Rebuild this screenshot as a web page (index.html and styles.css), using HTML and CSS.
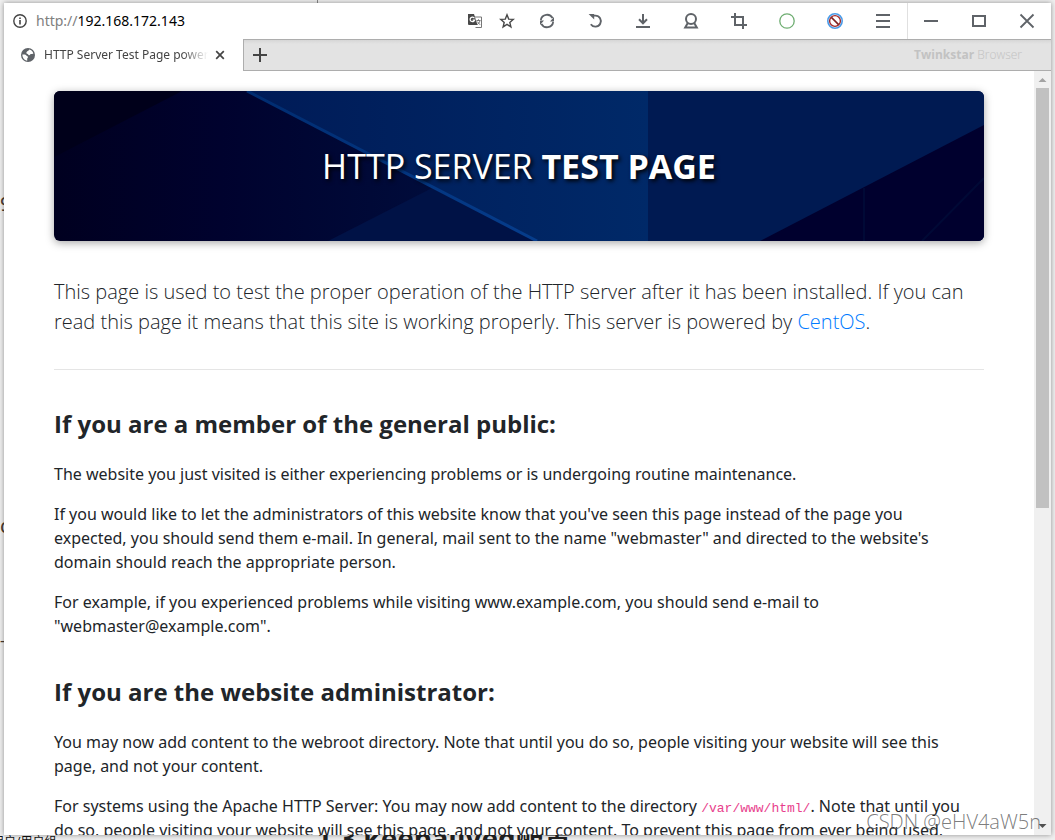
FILE: index.html
```html
<!DOCTYPE html>
<html lang="en">
<head>
  <meta charset="utf-8">
  <title>HTTP Server Test Page powered by CentOS</title>
  <link rel="stylesheet" href="styles.css">
</head>
<body>
  <!-- document lying behind the browser window -->
  <div class="desktop" aria-hidden="true">
    <span class="scrap scrap-nine">9</span>
    <span class="scrap scrap-c">c</span>
    <span class="scrap scrap-dash">-</span>
    <span class="scrap scrap-users">用户/用户组</span>
    <span class="scrap scrap-heading">1.3 keepalived配置</span>
    <span class="scrap-line"></span>
  </div>

  <div class="window">
    <header class="toolbar">
      <div class="address">
        <svg class="info" viewBox="0 0 16 16"><circle cx="8" cy="8" r="6.2" fill="none" stroke="currentColor" stroke-width="1.4"/><path d="M7.2 7h1.6v4.4H7.2zM7.2 4.4h1.6V6H7.2z" fill="currentColor"/></svg>
        <label for="url">http://</label>
        <input type="text" id="url" value="192.168.172.143">
      </div>
      <button type="button" class="tool small" aria-label="Translate">
        <svg viewBox="0 0 16 16"><path d="M7 4h7.5v10.5H8.5" fill="none" stroke="#777"/><path d="M1 1h6l3.5 11H2a1 1 0 0 1-1-1z" fill="#484848"/><path d="M7.4 5.2A2.3 2.3 0 1 0 7.6 7.2H5.6" fill="none" stroke="#fff" stroke-width="1.2"/><path d="M9.5 7.5h4M11.5 6.3v1.2M13 7.6c-.5 1.8-1.6 3.2-2.8 4M10.3 8.6l2.8 3.2" fill="none" stroke="#777"/></svg>
      </button>
      <button type="button" class="tool small" aria-label="Bookmark">
        <svg viewBox="0 0 16 16"><path d="M8 1.8l1.7 4.3 4.6.3-3.5 3 1.1 4.5L8 11.4l-3.9 2.5 1.1-4.5-3.5-3 4.6-.3z" fill="none" stroke="currentColor" stroke-width="1.4"/></svg>
      </button>
      <button type="button" class="tool" aria-label="Reload">
        <svg viewBox="0 0 16 16"><path d="M1.8 7A6.3 6.3 0 0 1 13.6 5.2M14.2 9A6.3 6.3 0 0 1 2.4 10.8" fill="none" stroke="currentColor" stroke-width="1.8"/><path d="M15 4v4.5h-4zM1 12V7.5h4z" fill="currentColor"/></svg>
      </button>
      <button type="button" class="tool" aria-label="Undo close">
        <svg viewBox="0 0 16 16"><path d="M6 2.6h2.4a5.5 5.5 0 1 1-4.6 8.6" fill="none" stroke="currentColor" stroke-width="1.9"/><path d="M1.6 1h5.6v5.6z" fill="currentColor"/></svg>
      </button>
      <button type="button" class="tool" aria-label="Downloads">
        <svg viewBox="0 0 16 16"><path d="M8 1v9M4 6.3l4 4 4-4M1 14h14" fill="none" stroke="currentColor" stroke-width="2"/></svg>
      </button>
      <button type="button" class="tool" aria-label="Account">
        <svg viewBox="0 0 16 16"><circle cx="8" cy="6" r="5" fill="none" stroke="currentColor" stroke-width="2"/><path d="M4.8 10L2.2 14.6h11.6L11.2 10" fill="none" stroke="currentColor" stroke-width="2"/></svg>
      </button>
      <button type="button" class="tool" aria-label="Screenshot">
        <svg viewBox="0 0 16 16"><path d="M4 0v12h12M0 4h12v12" fill="none" stroke="currentColor" stroke-width="2"/></svg>
      </button>
      <button type="button" class="tool" aria-label="Status">
        <svg viewBox="0 0 16 16"><circle cx="8" cy="8" r="7.2" fill="none" stroke="#6fae72" stroke-width="1.3"/></svg>
      </button>
      <button type="button" class="tool" aria-label="Block ads">
        <svg viewBox="0 0 16 16"><circle cx="8" cy="8" r="7.2" fill="#fff" stroke="#4a9be8" stroke-width="1.6"/><circle cx="8" cy="8" r="5.4" fill="none" stroke="#a02a2a" stroke-width="1.4"/><path d="M4.4 4.4l7.2 7.2" stroke="#7c2222" stroke-width="1.6"/></svg>
      </button>
      <button type="button" class="tool" aria-label="Menu">
        <svg viewBox="0 0 16 16"><path d="M1 2h14M1 8h14M1 14h14" stroke="currentColor" stroke-width="2"/></svg>
      </button>
      <div class="window-buttons">
        <button type="button" class="tool" aria-label="Minimize">
          <svg viewBox="0 0 16 16"><path d="M1 8h14" stroke="currentColor" stroke-width="2"/></svg>
        </button>
        <button type="button" class="tool" aria-label="Maximize">
          <svg viewBox="0 0 16 16"><path d="M2 3h12v10H2z" fill="none" stroke="currentColor" stroke-width="2"/></svg>
        </button>
        <button type="button" class="tool" aria-label="Close">
          <svg viewBox="0 0 16 16"><path d="M1.5 1.5l13 13M14.5 1.5l-13 13" stroke="currentColor" stroke-width="1.8"/></svg>
        </button>
      </div>
    </header>

    <nav class="tabs">
      <div class="tab">
        <svg class="globe" viewBox="0 0 16 16"><circle cx="8" cy="8" r="7" fill="#5f6368"/><path d="M2.4 7.6c2-.4 3.4 0 4 .8.5.8 1.6.6 1.6 1.6s-.8 1-.8 1.8v2C4.4 13.4 2.3 11 2.4 7.6zM6.4 5.6c.2-1.4 2.4-1.4 2.8-3 2 .4 3.6 1.8 4.2 4-1.2.8-1.8 0-2.6.4s-.8 1.4-1.8 1.2-.6-1-1.4-1.2-1.4-.2-1.2-1.4z" fill="#fff"/></svg>
        <a class="tab-title" href="#">HTTP Server Test Page powered by CentOS</a>
        <button type="button" class="tab-close" aria-label="Close tab">
          <svg viewBox="0 0 10 10"><path d="M1.2 1.2l7.6 7.6M8.8 1.2L1.2 8.8" stroke="currentColor" stroke-width="1.7"/></svg>
        </button>
      </div>
      <div class="strip">
        <button type="button" class="new-tab" aria-label="New tab">
          <svg viewBox="0 0 14 14"><path d="M7 0v14M0 7h14" stroke="currentColor" stroke-width="2"/></svg>
        </button>
        <span class="brand"><b>Twinkstar</b> Browser</span>
      </div>
    </nav>

    <div class="view">
      <main class="page">
        <div class="hero">
          <svg class="hero-art" viewBox="0 0 930 150" preserveAspectRatio="none">
            <defs>
              <linearGradient id="night" x1="0" y1="0" x2="1" y2="0">
                <stop offset="0" stop-color="#000020"/>
                <stop offset="0.18" stop-color="#00022e"/>
                <stop offset="0.5" stop-color="#001040"/>
              </linearGradient>
              <linearGradient id="beam" x1="0" y1="0" x2="1" y2="0">
                <stop offset="0" stop-color="#001b57"/>
                <stop offset="1" stop-color="#002968"/>
              </linearGradient>
              <linearGradient id="edge" x1="0" y1="0" x2="1" y2="1">
                <stop offset="0" stop-color="#002c70"/>
                <stop offset="1" stop-color="#063d8c"/>
              </linearGradient>
            </defs>
            <rect width="930" height="150" fill="url(#night)"/>
            <path d="M0 0h128L0 66z" fill="#00001a"/>
            <path d="M274 150l104-53 105 53z" fill="#001246"/>
            <path d="M193 0h401v150H483z" fill="url(#beam)"/>
            <path d="M193 0l290 150" stroke="url(#edge)" stroke-width="3"/>
            <path d="M594 0h336v150H594z" fill="#001a52"/>
            <path d="M706 150L930 34v116z" fill="#00002e"/>
            <path d="M810 97v53M868 150l62-63" stroke="#000936" stroke-width="2" fill="none"/>
          </svg>
          <h1>HTTP SERVER <strong>TEST PAGE</strong></h1>
        </div>

        <p class="lead">This page is used to test the proper operation of the HTTP server after it has been installed. If you can read this page it means that this site is working properly. This server is powered by <a href="#">CentOS</a>.</p>
        <hr>

        <h2>If you are a member of the general public:</h2>
        <p>The website you just visited is either experiencing problems or is undergoing routine maintenance.</p>
        <p>If you would like to let the administrators of this website know that you've seen this page instead of the page you<br>expected, you should send them e-mail. In general, mail sent to the name "webmaster" and directed to the website's<br>domain should reach the appropriate person.</p>
        <p>For example, if you experienced problems while visiting www.example.com, you should send e-mail to "webmaster@example.com".</p>

        <h2>If you are the website administrator:</h2>
        <p>You may now add content to the webroot directory. Note that until you do so, people visiting your website will see this page, and not your content.</p>
        <p>For systems using the Apache HTTP Server: You may now add content to the directory <code>/var/www/html/</code>. Note that until you<br>do so, people visiting your website will see this page, and not your content. To prevent this page from ever being used,</p>
      </main>
      <div class="scrollbar">
        <svg class="arrow" viewBox="0 0 17 17"><path d="M8.5 7l4 4h-8z" fill="#a3a3a3"/></svg>
        <div class="thumb"></div>
        <svg class="arrow" viewBox="0 0 17 17"><path d="M4.5 6h8l-4 4z" fill="#505050"/></svg>
      </div>
    </div>
  </div>

  <span class="watermark">CSDN @eHV4aW5n</span>
</body>
</html>
```
FILE: styles.css
```css
* {
  box-sizing: border-box;
}

body {
  margin: 0;
  height: 100vh;
  padding: 3px 4px 5px;
  overflow: hidden;
  background: #efefef;
  color: #212529;
  font-family: "Noto Sans", "Noto Sans CJK SC", sans-serif;
  font-size: 16px;
  line-height: 24px;
}

button {
  padding: 0;
  border: 0;
  background: none;
  color: inherit;
}

/* things peeking out from behind the window */
.scrap {
  position: absolute;
  color: #4a3a30;
  white-space: nowrap;
}

.scrap-nine {
  left: 0;
  top: 192px;
  font-size: 20px;
}

.scrap-c {
  left: 0;
  top: 514px;
  font-size: 20px;
}

.scrap-dash {
  left: 0;
  top: 628px;
}

.scrap-users {
  left: -8px;
  top: 834px;
  color: #111;
  font-size: 12px;
  line-height: 16px;
}

.scrap-heading {
  left: 316px;
  top: 820px;
  color: #222;
  font-family: "Open Sans", "Noto Sans CJK SC", sans-serif;
  font-size: 28px;
  font-weight: bold;
  line-height: 36px;
}

.scrap-line {
  position: absolute;
  left: 317px;
  top: 0;
  width: 1px;
  height: 3px;
  background: #888;
}

.window {
  position: relative;
  display: flex;
  flex-direction: column;
  height: 100%;
  background: #fff;
  box-shadow: 0 0 5px rgba(0, 0, 0, 0.4);
}

/* toolbar */
.toolbar {
  display: flex;
  height: 36px;
  flex: none;
  color: #5f6368;
}

.address {
  display: flex;
  flex: 1;
  align-items: center;
  min-width: 0;
  padding-left: 8px;
  font-size: 14px;
}

.address label {
  margin-left: 8px;
  color: #808080;
}

.address input {
  flex: 1;
  min-width: 0;
  padding: 0;
  border: 0;
  outline: 0;
  color: #000;
  font: inherit;
}

.info {
  width: 16px;
  height: 16px;
  color: #444;
}

.tool {
  display: flex;
  align-items: center;
  justify-content: center;
  width: 48px;
  height: 36px;
}

.tool.small {
  width: 32px;
  color: #484848;
}

.tool svg {
  width: 16px;
  height: 16px;
}

.window-buttons {
  display: flex;
  box-shadow: inset 1px 0 #e0e0e0;
}

/* tab strip */
.tabs {
  display: flex;
  height: 32px;
  flex: none;
}

.tab {
  display: flex;
  align-items: center;
  width: 239px;
  padding: 0 18px 0 16px;
}

.globe {
  width: 16px;
  height: 16px;
}

.tab-title {
  width: 164px;
  margin-left: 8px;
  overflow: hidden;
  color: #444;
  font-size: 12px;
  text-decoration: none;
  white-space: nowrap;
  -webkit-mask-image: linear-gradient(to right, #000 84%, transparent);
  mask-image: linear-gradient(to right, #000 84%, transparent);
}

.tab-close {
  display: flex;
  margin-left: 7px;
  color: #444;
}

.tab-close svg {
  width: 10px;
  height: 10px;
}

.strip {
  display: flex;
  flex: 1;
  align-items: center;
  justify-content: space-between;
  padding: 0 29px 0 9px;
  border: 1px solid #adadad;
  border-right: 0;
  background: linear-gradient(#d6d6d6, #e3e3e3 4px);
  color: #444;
}

.new-tab {
  display: flex;
}

.new-tab svg {
  width: 14px;
  height: 14px;
}

.brand {
  color: #c2c2c2;
  font-family: "Open Sans", sans-serif;
  font-size: 12px;
  font-weight: 300;
}

.brand b {
  font-weight: 700;
}

/* viewport */
.view {
  display: flex;
  flex: 1;
  min-height: 0;
}

.page {
  flex: 1;
  padding: 20px 50px 0;
  overflow: hidden;
}

.scrollbar {
  display: flex;
  flex-direction: column;
  width: 17px;
  background: #f0f0f0;
}

.arrow {
  width: 17px;
  height: 17px;
  flex: none;
}

.thumb {
  height: 55%;
  margin: 0 2px auto;
  background: #c1c1c1;
}

.hero {
  display: grid;
  height: 150px;
  overflow: hidden;
  border-radius: 6px;
  box-shadow: 0 2px 8px rgba(0, 0, 0, 0.35);
}

.hero-art,
.hero h1 {
  grid-area: 1 / 1;
}

.hero-art {
  width: 100%;
  height: 150px;
}

.hero h1 {
  z-index: 1;
  margin: 0;
  align-self: center;
  color: #fff;
  font-family: "Open Sans", sans-serif;
  font-size: 34px;
  font-weight: 400;
  line-height: 40px;
  text-align: center;
  text-shadow: 2px 2px 4px #000;
}

.lead {
  margin: 36px 0 32px;
  font-family: "Open Sans", sans-serif;
  font-size: 20px;
  font-weight: 300;
  line-height: 30px;
}

.lead a {
  color: #007bff;
  text-decoration: none;
}

hr {
  margin: 0;
  border: 0;
  border-top: 1px solid #e5e5e5;
}

h2 {
  margin: 38px 0 22px;
  font-family: "Open Sans", sans-serif;
  font-size: 24px;
  font-weight: 700;
  line-height: 32px;
}

p {
  margin: 0 0 16px;
}

code {
  color: #e83e8c;
  font-family: "Liberation Mono", monospace;
  font-size: 13px;
  line-height: 16px;
}

.watermark {
  position: absolute;
  right: 14px;
  bottom: 4px;
  color: rgba(90, 90, 90, 0.8);
  font-family: "Open Sans", sans-serif;
  font-size: 20px;
  font-weight: 300;
  line-height: 28px;
}
```
